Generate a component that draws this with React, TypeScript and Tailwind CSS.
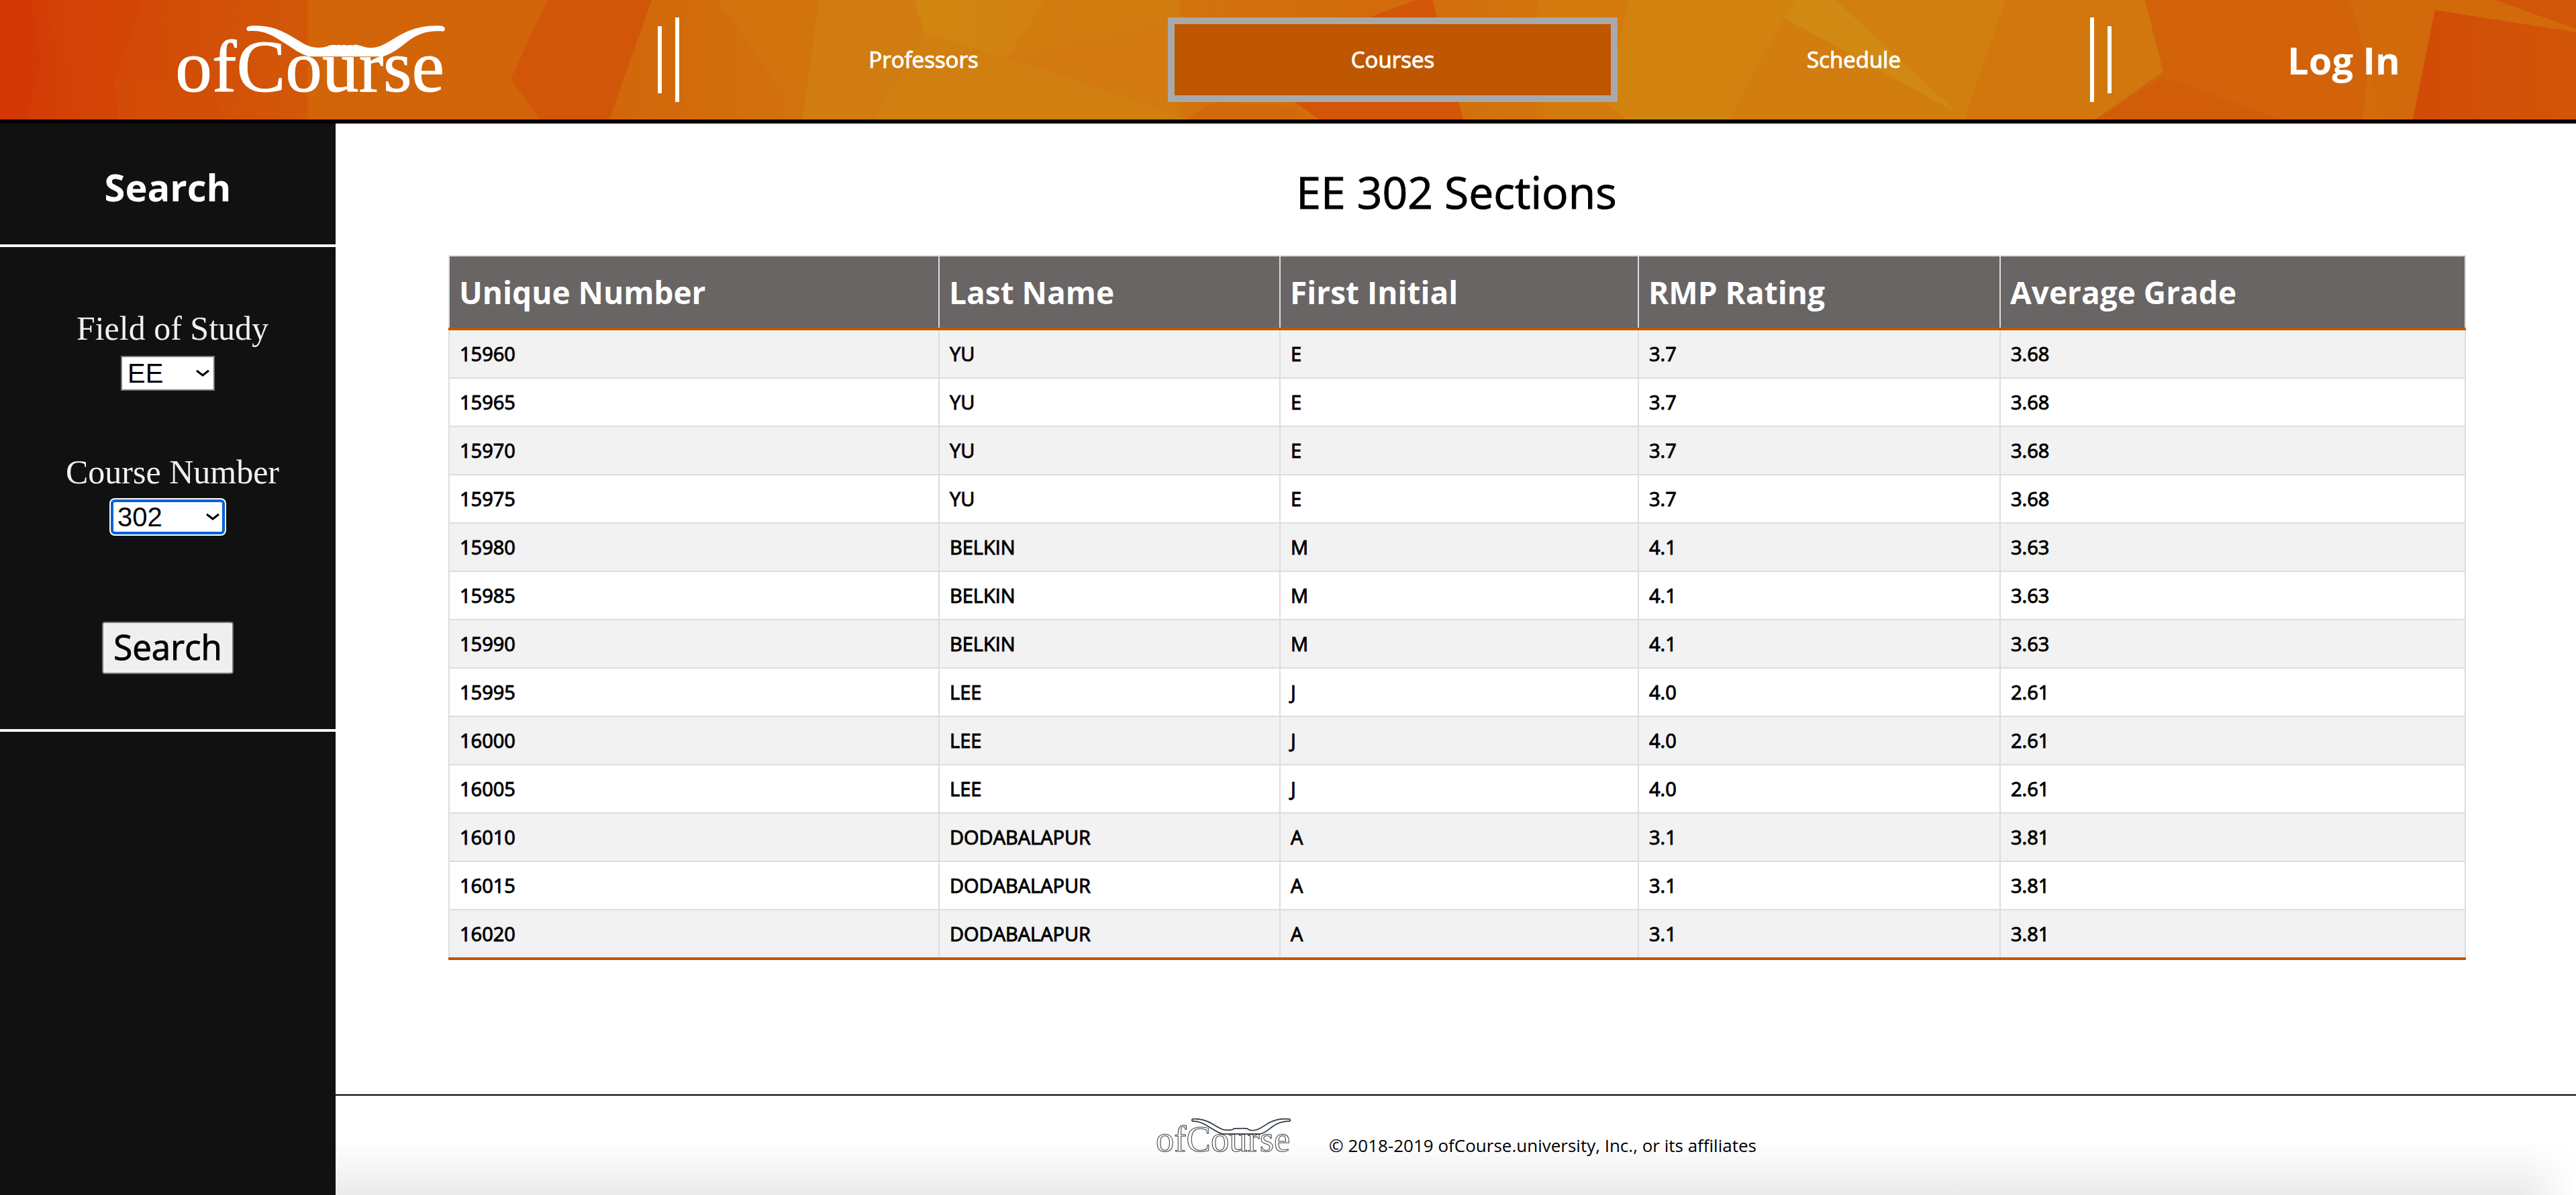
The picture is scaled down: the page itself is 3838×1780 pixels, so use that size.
import React from "react";

type Section = { unique: string; last: string; initial: string; rating: string; grade: string };

const SECTIONS: Section[] = [
  { unique: "15960", last: "YU", initial: "E", rating: "3.7", grade: "3.68" },
  { unique: "15965", last: "YU", initial: "E", rating: "3.7", grade: "3.68" },
  { unique: "15970", last: "YU", initial: "E", rating: "3.7", grade: "3.68" },
  { unique: "15975", last: "YU", initial: "E", rating: "3.7", grade: "3.68" },
  { unique: "15980", last: "BELKIN", initial: "M", rating: "4.1", grade: "3.63" },
  { unique: "15985", last: "BELKIN", initial: "M", rating: "4.1", grade: "3.63" },
  { unique: "15990", last: "BELKIN", initial: "M", rating: "4.1", grade: "3.63" },
  { unique: "15995", last: "LEE", initial: "J", rating: "4.0", grade: "2.61" },
  { unique: "16000", last: "LEE", initial: "J", rating: "4.0", grade: "2.61" },
  { unique: "16005", last: "LEE", initial: "J", rating: "4.0", grade: "2.61" },
  { unique: "16010", last: "DODABALAPUR", initial: "A", rating: "3.1", grade: "3.81" },
  { unique: "16015", last: "DODABALAPUR", initial: "A", rating: "3.1", grade: "3.81" },
  { unique: "16020", last: "DODABALAPUR", initial: "A", rating: "3.1", grade: "3.81" },
];

const HORNS =
  "M456 59 C520 54 570 66 625 95 C665 117 690 136 718 148 C745 158 780 158 803 150 C812 147 816 142 826 145 C834 141 842 147 850 144 C858 141 864 148 874 144 C882 141 888 148 898 145 C906 141 914 148 924 144 C934 140 940 148 952 147 C970 155 995 160 1022 154 C1060 145 1095 116 1142 92 C1196 66 1250 54 1316 59 C1332 62 1332 81 1320 83 C1255 78 1212 92 1165 126 C1130 154 1095 182 1052 196 L720 196 C670 178 640 152 600 128 C555 98 510 76 452 82 C438 80 438 62 456 59 Z";

const HORNS_OUTLINE =
  "M456 62 C520 56 570 72 625 102 C665 126 700 148 730 158 C760 162 790 162 812 156 C816 148 822 146 832 148 C842 144 852 150 862 146 C872 144 882 150 892 146 C904 142 914 150 924 146 L944 148 L960 160 C985 166 1010 164 1030 156 C1065 145 1100 116 1145 92 C1196 66 1250 56 1316 62 C1330 64 1330 80 1318 82 C1255 80 1212 96 1165 132 C1130 158 1100 188 1056 196 L724 196 C690 190 640 156 600 132 C555 102 510 78 456 82 C444 80 444 64 456 62 Z";

function Logo({ outlined = false, className }: { outlined?: boolean; className: string }) {
  return (
    <svg viewBox="120 45 1215 330" className={className} role="img" aria-label="ofCourse">
      <path
        d={outlined ? HORNS_OUTLINE : HORNS}
        fill={outlined ? "none" : "#fff"}
        stroke={outlined ? "#2b3640" : "none"}
        strokeWidth={10}
        strokeLinejoin="round"
      />
      <text
        x="124"
        y="350"
        fontSize="328"
        fontFamily="'Liberation Serif', serif"
        fill={outlined ? "none" : "#fff"}
        stroke={outlined ? "#3a3a3a" : "#fff"}
        strokeWidth={outlined ? 6 : 3}
      >
        ofCourse
      </text>
    </svg>
  );
}

function Facets() {
  return (
    <svg
      className="absolute inset-0 h-full w-full"
      viewBox="0 0 3838 178"
      preserveAspectRatio="none"
      aria-hidden="true"
    >
      <defs>
        <linearGradient id="base" x1="0" x2="3838" y1="0" y2="0" gradientUnits="userSpaceOnUse">
          <stop offset="0" stopColor="#d33805" />
          <stop offset="0.05" stopColor="#d34907" />
          <stop offset="0.119" stopColor="#d25808" />
          <stop offset="0.12" stopColor="#d26409" />
          <stop offset="0.24" stopColor="#d2670a" />
          <stop offset="0.3" stopColor="#d2700d" />
          <stop offset="0.36" stopColor="#d27c10" />
          <stop offset="0.457" stopColor="#d27b0f" />
          <stop offset="0.459" stopColor="#d2730d" />
          <stop offset="0.53" stopColor="#d26b0c" />
          <stop offset="0.59" stopColor="#d2730d" />
          <stop offset="0.64" stopColor="#d1800f" />
          <stop offset="0.76" stopColor="#d27d0f" />
          <stop offset="0.83" stopColor="#d2720d" />
          <stop offset="1" stopColor="#d2660a" />
        </linearGradient>
        <linearGradient id="dusk" x1="0" x2="1" y1="0" y2="0">
          <stop offset="0" stopColor="#d24a07" />
          <stop offset="0.4" stopColor="#d25008" />
          <stop offset="1" stopColor="#d25508" />
        </linearGradient>
        <linearGradient id="flare" x1="0" x2="1" y1="0" y2="0">
          <stop offset="0" stopColor="#d18711" />
          <stop offset="1" stopColor="#d28110" />
        </linearGradient>
      </defs>
      <rect width="3838" height="178" fill="url(#base)" />
      <polygon points="0,0 45,0 60,90 40,178 0,178" fill="#d33504" opacity="0.4" />
      <polygon points="60,0 212,0 170,118 178,178 130,178" fill="#d34306" opacity="0.6" />
      <polygon points="170,118 320,130 330,178 176,178" fill="#d34f07" opacity="0.7" />
      <polygon points="620,0 816,0 761,117 804,178 460,178 540,90" fill="#d26409" opacity="0.7" />
      <polygon points="816,0 971,0 908,178 804,178 761,117" fill="#d25608" />
      <polygon points="1069,0 1240,0 1220,178 1196,178" fill="#d2740e" />
      <polygon points="1220,0 1362,0 1378,50 1300,178 1196,178" fill="#d17c10" />
      <polygon points="1362,0 1557,0 1500,87 1378,50" fill="url(#flare)" />
      <polygon points="1500,87 1770,178 1300,178 1378,50" fill="#d17f10" />
      <polygon points="1500,87 1757,30 1757,160" fill="#d27a0f" />
      <polygon points="1774,172 1811,152 1933,158 1933,178 1774,178" fill="#d26a0c" />
      <polygon points="2110,0 2134,0 2180,178 1966,178 1929,152 2040,26" fill="#d25508" />
      <polygon points="2292,0 2427,0 2390,152 2423,178 2300,178" fill="#d27a0e" />
      <polygon points="2427,0 2674,0 2658,27 2576,178 2423,178 2390,152" fill="#d1820f" />
      <polygon points="2658,27 2914,167 2914,178 2576,178" fill="#d27d0f" />
      <polygon points="2735,0 2988,0 2927,178" fill="#d1800f" />
      <polygon points="2674,0 2735,0 2927,178 2914,167 2658,27" fill="#d08912" />
      <polygon points="2988,0 3196,0 3223,107 3122,178 2927,178" fill="#d2760e" />
      <polygon points="3196,0 3501,0 3530,83 3520,178 3122,178 3223,107" fill="#d2630a" />
      <polygon points="3223,115 3400,178 3122,178" fill="#d25d09" />
      <polygon points="3501,0 3628,0 3628,15 3595,178 3550,178" fill="#d2690b" />
      <polygon points="3628,0 3717,0 3838,43 3838,48 3628,15" fill="#d26a0a" />
      <polygon points="3717,0 3838,0 3838,43" fill="#d25608" />
      <polygon points="3628,15 3838,48 3838,178 3595,178" fill="url(#dusk)" />
    </svg>
  );
}

function ChevronDown({ className }: { className: string }) {
  return (
    <svg viewBox="0 0 20 12" className={className} fill="none" stroke="#000" strokeWidth="3" aria-hidden="true">
      <path d="M1 2 L10 9 L19 2" />
    </svg>
  );
}

export default function App() {
  return (
    <div className="flex min-h-screen flex-col bg-white font-['Open_Sans',sans-serif] text-black">
      <header className="relative grid h-[184px] grid-cols-[980fr_32px_2102fr_32px_692fr] items-center border-b-[6px] border-black bg-[#d2700d] text-white">
        <Facets />
        <a href="#home" className="relative flex justify-center pr-14">
          <Logo className="h-[110px] w-[405px] overflow-visible" />
        </a>
        <div className="relative flex items-center justify-between">
          <span className="h-[100px] w-[6px] bg-white" />
          <span className="h-[126px] w-[6px] bg-white" />
        </div>
        <nav className="relative grid h-[126px] grid-cols-[728fr_670fr_704fr] text-[33px] leading-10 [-webkit-text-stroke:1px]">
          <a href="#professors" className="flex items-center justify-center">
            Professors
          </a>
          <a
            href="#courses"
            aria-current="page"
            className="flex items-center justify-center border-[10px] border-[#a9a9a9] bg-[#bf5700]"
          >
            Courses
          </a>
          <a href="#schedule" className="flex items-center justify-center">
            Schedule
          </a>
        </nav>
        <div className="relative flex items-center justify-between">
          <span className="h-[126px] w-[6px] bg-white" />
          <span className="h-[100px] w-[6px] bg-white" />
        </div>
        <a href="#login" className="relative text-center text-[56px] leading-[64px] font-bold">
          Log In
        </a>
      </header>

      <div className="flex flex-1">
        <aside className="w-[500px] shrink-0 bg-[#111] text-white">
          <h2 className="border-b-4 border-white pt-[62px] pb-[54px] text-center text-[56px] leading-[64px] font-bold">
            Search
          </h2>
          <form
            className="flex flex-col items-center border-b-4 border-white pt-[93px] pb-[82px]"
            onSubmit={(e) => e.preventDefault()}
          >
            <label
              htmlFor="field"
              className="mb-[13px] pl-[14px] font-['Liberation_Serif',serif] text-[50px] leading-[56px] text-[#f1f1f1]"
            >
              Field of Study
            </label>
            <div className="relative mb-[93px]">
              <select
                id="field"
                defaultValue="EE"
                className="block h-[52px] w-[140px] appearance-none border-2 border-[#767676] bg-white pl-2 font-['Liberation_Sans',sans-serif] text-[40px] leading-[48px] text-black"
              >
                <option>EE</option>
              </select>
              <ChevronDown className="pointer-events-none absolute top-5 right-2 h-3 w-5" />
            </div>
            <label
              htmlFor="course"
              className="mb-[13px] pl-[14px] font-['Liberation_Serif',serif] text-[50px] leading-[56px] text-[#f1f1f1]"
            >
              Course Number
            </label>
            <div className="relative mb-[130px]">
              <select
                id="course"
                defaultValue="302"
                className="block h-[52px] w-[170px] appearance-none rounded-md border-4 border-[#0063d6] bg-white pl-[6px] font-['Liberation_Sans',sans-serif] text-[40px] leading-[44px] text-black ring-2 ring-white"
              >
                <option>302</option>
              </select>
              <ChevronDown className="pointer-events-none absolute top-5 right-2 h-3 w-5" />
            </div>
            <button
              type="submit"
              className="h-[78px] w-[196px] rounded-sm border-2 border-[#767676] bg-[#efefef] pb-1 text-[51px] leading-[68px] text-black [-webkit-text-stroke:1px]"
            >
              Search
            </button>
          </form>
        </aside>

        <div className="flex min-w-0 flex-1 flex-col">
          <main className="flex-1 pt-14 pr-[166px] pl-[168px]">
            <h1 className="mb-[50px] text-center text-[66px] leading-[90px] font-normal [-webkit-text-stroke:1px]">
              EE 302 Sections
            </h1>
            <table className="w-full table-fixed border-collapse text-left">
              <colgroup>
                <col className="w-[730px]" />
                <col className="w-[508px]" />
                <col className="w-[534px]" />
                <col className="w-[539px]" />
                <col className="w-[693px]" />
              </colgroup>
              <thead>
                <tr className="border-b-4 border-[#bf5700] bg-[#696564] text-[46px] leading-[106px] text-white">
                  {["Unique Number", "Last Name", "First Initial", "RMP Rating", "Average Grade"].map((h) => (
                    <th key={h} scope="col" className="border-x-2 border-t-2 border-x-[#ddd] border-t-[#ddd] px-[14px] font-bold">
                      {h}
                    </th>
                  ))}
                </tr>
              </thead>
              <tbody>
                {SECTIONS.map((s) => (
                  <tr
                    key={s.unique}
                    className="border-b-2 border-[#ddd] text-[29px] leading-[70px] [-webkit-text-stroke:1px] odd:bg-[#f2f2f2] last:border-b-4 last:border-[#bf5700]"
                  >
                    {[s.unique, s.last, s.initial, s.rating, s.grade].map((v, i) => (
                      <td key={i} className="border-x-2 border-x-[#ddd] px-[15px]">
                        {v}
                      </td>
                    ))}
                  </tr>
                ))}
              </tbody>
            </table>
          </main>

          <footer className="relative flex h-[150px] items-start justify-center gap-[56px] border-t-2 border-black bg-linear-to-b from-white from-45% to-[#ebebeb] pt-8">
            <div className="absolute inset-y-0 right-0 w-20 bg-linear-to-r from-transparent to-white" />
            <Logo outlined className="h-[55px] w-[203px] overflow-visible" />
            <p className="mt-6 text-[26px] leading-9">© 2018-2019 ofCourse.university, Inc., or its affiliates</p>
          </footer>
        </div>
      </div>
    </div>
  );
}
